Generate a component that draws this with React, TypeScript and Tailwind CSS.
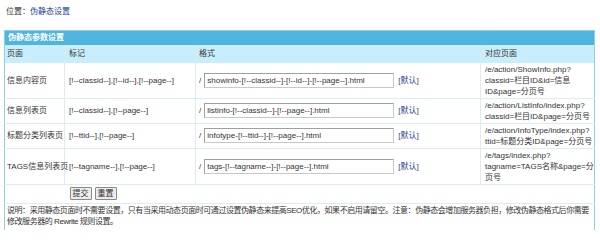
const rows = [
  {
    page: '信息内容页',
    tags: '[!--classid--],[!--id--],[!--page--]',
    value: 'showinfo-[!--classid--]-[!--id--]-[!--page--].html',
    target: ['/e/action/ShowInfo.php?', 'classid=栏目ID&id=信息', 'ID&page=分页号'],
  },
  {
    page: '信息列表页',
    tags: '[!--classid--],[!--page--]',
    value: 'listinfo-[!--classid--]-[!--page--].html',
    target: ['/e/action/ListInfo/index.php?', 'classid=栏目ID&page=分页号'],
  },
  {
    page: '标题分类列表页',
    tags: '[!--ttid--],[!--page--]',
    value: 'infotype-[!--ttid--]-[!--page--].html',
    target: ['/e/action/InfoType/index.php?', 'ttid=标题分类ID&page=分页号'],
  },
  {
    page: 'TAGS信息列表页',
    tags: '[!--tagname--],[!--page--]',
    value: 'tags-[!--tagname--]-[!--page--].html',
    target: ['/e/tags/index.php?', 'tagname=TAGS名称&page=分', '页号'],
  },
]

export default function App() {
  return (
    <div className="w-[600px] h-[230px] overflow-hidden bg-white text-[8px] leading-[11px] text-[#333] font-['Liberation_Sans','Noto_Sans_CJK_SC',sans-serif]">
      {/* Location */}
      <div className="pl-[6px] pt-[6px] h-[30px]">
        位置：<a className="text-[#1a3f95]">伪静态设置</a>
      </div>

      {/* Settings table */}
      <table className="ml-[4px] w-[590px] border border-[#8fd0ea] border-collapse table-fixed">
        <colgroup>
          <col className="w-[60px]" />
          <col className="w-[131px]" />
          <col className="w-[285px]" />
          <col className="w-[114px]" />
        </colgroup>
        <thead>
          <tr>
            <th colSpan={4} className="h-[14px] p-0 bg-[#4fb5df] text-white text-left font-bold px-[3px]">
              伪静态参数设置
            </th>
          </tr>
          <tr className="bg-[#c9eefb] h-[18px]">
            <td className="px-[2px] border-r border-[#d6ecf5]">页面</td>
            <td className="px-[4px] border-r border-[#d6ecf5]">标记</td>
            <td className="px-[3px] border-r border-[#d6ecf5]">格式</td>
            <td className="px-[4px]">对应页面</td>
          </tr>
        </thead>
        <tbody>
          {rows.map((r) => (
            <tr key={r.page} className="border-b border-[#dcecf3]">
              <td className="px-[2px] py-[1px] border-r border-[#dcecf3] whitespace-nowrap">{r.page}</td>
              <td className="px-[4px] border-r border-[#dcecf3] whitespace-nowrap">{r.tags}</td>
              <td className="pl-[3px] border-r border-[#dcecf3] whitespace-nowrap">
                <div className="flex items-center gap-[3px]">
                  <span>/</span>
                  <input
                    readOnly
                    value={r.value}
                    className="w-[190px] h-[15px] px-[2px] text-[8px] text-[#333] border border-[#c8c8c8] border-t-[#a0a0a0] border-l-[#a0a0a0] outline-none"
                  />
                  <a className="ml-[1px] text-[#1a3f95]">[默认]</a>
                </div>
              </td>
              <td className="px-[4px] py-[1px] whitespace-nowrap">
                {r.target.map((t) => (
                  <div key={t}>{t}</div>
                ))}
              </td>
            </tr>
          ))}
          <tr className="h-[19px] border-b border-[#dcecf3]">
            <td />
            <td colSpan={3} className="px-[5px]">
              <div className="flex gap-[3px]">
                <button className="h-[13px] px-[2px] bg-[#ececec] border border-[#8a8a8a] rounded-[1px] leading-[10px]">提交</button>
                <button className="h-[13px] px-[2px] bg-[#ececec] border border-[#8a8a8a] rounded-[1px] leading-[10px]">重置</button>
              </div>
            </td>
          </tr>
          <tr>
            <td colSpan={4} className="px-[2px] pt-[1px] pb-[3px]">
              <div className="whitespace-nowrap tracking-[-0.45px]">
                说明：采用静态页面时不需要设置，只有当采用动态页面时可通过设置伪静态来提高SEO优化，如果不启用请留空。注意：伪静态会增加服务器负担，修改伪静态格式后你需要
              </div>
              <div className="tracking-[-0.45px]">修改服务器的 Rewrite 规则设置。</div>
            </td>
          </tr>
        </tbody>
      </table>
    </div>
  )
}
